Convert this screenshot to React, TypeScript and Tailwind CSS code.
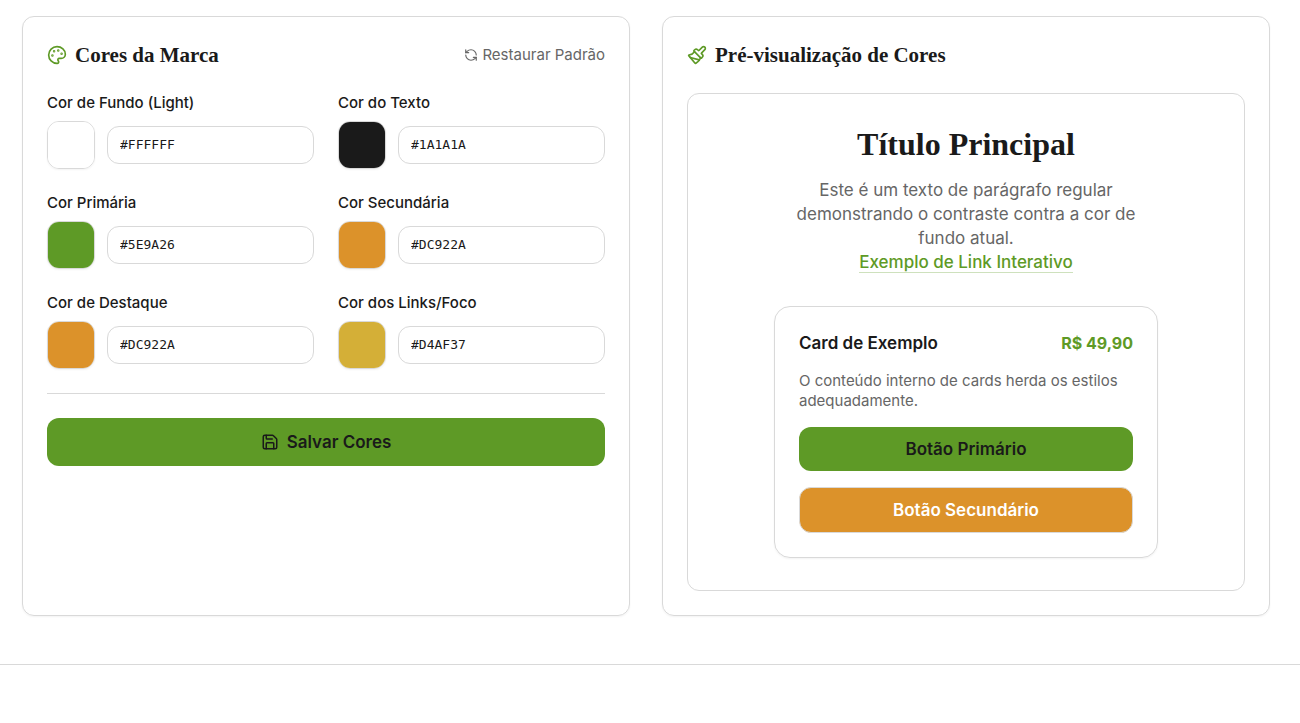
import React, { useState } from 'react';
import { Paintbrush, Palette, RefreshCcw, Save } from 'lucide-react';

interface BrandColor {
  id: string;
  label: string;
  value: string;
}

const defaultColors: BrandColor[] = [
  { id: 'background', label: 'Cor de Fundo (Light)', value: '#FFFFFF' },
  { id: 'text', label: 'Cor do Texto', value: '#1A1A1A' },
  { id: 'primary', label: 'Cor Primária', value: '#5E9A26' },
  { id: 'secondary', label: 'Cor Secundária', value: '#DC922A' },
  { id: 'accent', label: 'Cor de Destaque', value: '#DC922A' },
  { id: 'link', label: 'Cor dos Links/Foco', value: '#D4AF37' },
];

interface ColorFieldProps {
  color: BrandColor;
  onChange: (id: string, value: string) => void;
}

const ColorField: React.FC<ColorFieldProps> = ({ color, onChange }) => (
  <div className="flex flex-col gap-2">
    <label htmlFor={color.id} className="text-[15px] leading-5 font-medium">
      {color.label}
    </label>
    <div className="flex items-center gap-3">
      <input
        type="color"
        aria-label={color.label}
        value={color.value.toLowerCase()}
        onChange={(e) => onChange(color.id, e.target.value.toUpperCase())}
        className="h-12 w-12 shrink-0 cursor-pointer appearance-none overflow-hidden rounded-xl border border-[#d9d9d9] bg-transparent p-0 shadow-xs [&::-webkit-color-swatch-wrapper]:p-0 [&::-webkit-color-swatch]:border-0"
      />
      <input
        id={color.id}
        type="text"
        value={color.value}
        onChange={(e) => onChange(color.id, e.target.value)}
        className="min-w-0 flex-1 rounded-xl border border-[#d9d9d9] bg-white px-3 py-2 font-['DejaVu_Sans_Mono',monospace] text-[13px] leading-5 uppercase outline-none focus:border-[#5e9a26]"
      />
    </div>
  </div>
);

const App: React.FC = () => {
  const [colors, setColors] = useState<BrandColor[]>(defaultColors);

  const handleChange = (id: string, value: string) => {
    setColors((prev) => prev.map((c) => (c.id === id ? { ...c, value } : c)));
  };

  return (
    <div className="bg-white font-['Inter',sans-serif] text-[17px] leading-6 text-[#1a1a1a]">
      <main className="grid grid-cols-1 gap-8 pt-4 pr-[30px] pb-12 pl-[22px] md:grid-cols-2">
        {/* Brand colors */}
        <section className="rounded-xl border border-[#d9d9d9] p-6 shadow-xs">
          <div className="mb-6 flex items-center justify-between">
            <h2 className="flex items-center gap-2 font-['Liberation_Serif',serif] text-[21px] leading-7 font-bold">
              <Palette className="h-5 w-5 text-[#5e9a26]" />
              Cores da Marca
            </h2>
            <button
              type="button"
              onClick={() => setColors(defaultColors)}
              className="flex items-center gap-1 text-[15px] leading-5 text-[#666666]"
            >
              <RefreshCcw className="h-3.5 w-3.5" />
              Restaurar Padrão
            </button>
          </div>

          <div className="grid grid-cols-2 gap-6">
            {colors.map((color) => (
              <ColorField key={color.id} color={color} onChange={handleChange} />
            ))}
          </div>

          <div className="mt-6 border-t border-[#d9d9d9] pt-6">
            <button
              type="button"
              className="flex w-full items-center justify-center gap-2 rounded-xl bg-[#5e9a26] py-3 font-semibold"
            >
              <Save className="h-4.5 w-4.5" />
              Salvar Cores
            </button>
          </div>
        </section>

        {/* Preview */}
        <section className="rounded-xl border border-[#d9d9d9] p-6 shadow-xs">
          <h2 className="mb-6 flex items-center gap-2 font-['Liberation_Serif',serif] text-[21px] leading-7 font-bold">
            <Paintbrush className="h-5 w-5 text-[#5e9a26]" />
            Pré-visualização de Cores
          </h2>

          <div className="flex flex-col items-center rounded-xl border border-[#d9d9d9] p-8">
            <div className="mb-8 max-w-sm text-center">
              <h3 className="mb-4 font-['Liberation_Serif',serif] text-[32px] leading-9 font-bold">
                Título Principal
              </h3>
              <p className="text-[#666666]">
                Este é um texto de parágrafo regular demonstrando o contraste contra a cor de fundo
                atual.
              </p>
              <a
                href="#"
                className="border-b border-[#5e9a26]/30 font-medium text-[#5e9a26]"
              >
                Exemplo de Link Interativo
              </a>
            </div>

            <div className="w-full max-w-sm rounded-2xl border border-[#d9d9d9] p-6 shadow-xs">
              <div className="mb-4 flex items-center justify-between">
                <span className="font-semibold">Card de Exemplo</span>
                <span className="text-base font-bold text-[#5e9a26]">R$ 49,90</span>
              </div>
              <p className="mb-4 text-[15px] leading-5 text-[#666666]">
                O conteúdo interno de cards herda os estilos adequadamente.
              </p>
              <div className="flex flex-col gap-4">
                <button type="button" className="rounded-xl bg-[#5e9a26] py-2.5 font-semibold">
                  Botão Primário
                </button>
                <button
                  type="button"
                  className="rounded-xl border border-[#d9d9d9] bg-[#dc922a] py-2.5 font-semibold text-white"
                >
                  Botão Secundário
                </button>
              </div>
            </div>
          </div>
        </section>
      </main>
      <footer className="border-t border-[#d9d9d9]" />
    </div>
  );
};

export default App;
